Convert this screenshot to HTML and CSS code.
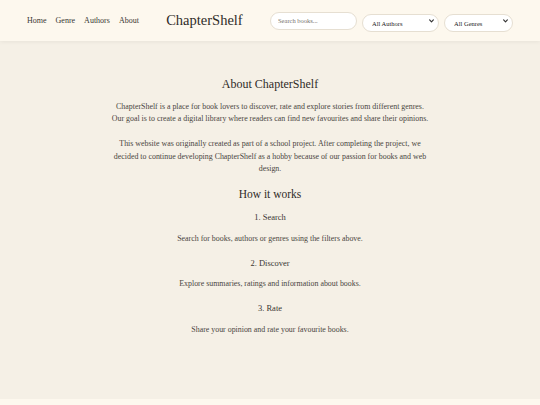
FILE: index.html
```html
<!DOCTYPE html>
<html lang="en">
<head>
<meta charset="utf-8">
<title>About ChapterShelf</title>
<link rel="stylesheet" href="styles.css">
</head>
<body>
<header class="site-header">
  <nav class="nav">
    <a href="#">Home</a>
    <a href="#">Genre</a>
    <a href="#">Authors</a>
    <a href="#">About</a>
  </nav>
  <div class="logo">ChapterShelf</div>
  <div class="controls">
    <input class="search" type="text" placeholder="Search books...">
    <div class="select-wrap authors">
      <select class="filter"><option>All Authors</option></select>
      <svg class="chev" viewBox="0 0 8 6" width="5" height="4"><path d="M1 1.2 L4 4.4 L7 1.2" fill="none" stroke="#333" stroke-width="1.8" stroke-linecap="round" stroke-linejoin="round"/></svg>
    </div>
    <div class="select-wrap genres">
      <select class="filter"><option>All Genres</option></select>
      <svg class="chev" viewBox="0 0 8 6" width="5" height="4"><path d="M1 1.2 L4 4.4 L7 1.2" fill="none" stroke="#333" stroke-width="1.8" stroke-linecap="round" stroke-linejoin="round"/></svg>
    </div>
  </div>
</header>
<main class="content">
  <h1 class="title">About ChapterShelf</h1>
  <p class="text">ChapterShelf is a place for book lovers to discover, rate and explore stories from different genres. Our goal is to create a digital library where readers can find new favourites and share their opinions.</p>
  <p class="text">This website was originally created as part of a school project. After completing the project, we decided to continue developing ChapterShelf as a hobby because of our passion for books and web design.</p>
  <h2 class="subtitle">How it works</h2>
  <h3 class="step">1. Search</h3>
  <p class="text">Search for books, authors or genres using the filters above.</p>
  <h3 class="step">2. Discover</h3>
  <p class="text">Explore summaries, ratings and information about books.</p>
  <h3 class="step">3. Rate</h3>
  <p class="text">Share your opinion and rate your favourite books.</p>
</main>
<footer class="site-footer"></footer>
</body>
</html>
```
FILE: styles.css
```css
* { box-sizing: border-box; }
html, body { margin: 0; padding: 0; }
body {
  background: #f5f0e6;
  font-family: "Liberation Serif", "DejaVu Serif", serif;
  color: #4a4541;
}
.site-header {
  height: 41px;
  background: #fdf8ee;
  display: flex;
  align-items: center;
  justify-content: space-between;
  padding: 0 27px;
  box-shadow: 0 1px 4px rgba(0,0,0,0.06);
  position: relative;
}
.nav { display: flex; gap: 9px; }
.nav a {
  color: #3a3633;
  text-decoration: none;
  font-size: 8px;
}
.logo {
  font-size: 14.5px;
  color: #2f2b28;
}
.controls { display: flex; gap: 5px; align-items: center; }
.search {
  width: 87px;
  height: 18px;
  border: 1px solid #e6dfd2;
  border-radius: 9px;
  background: #fff;
  font-family: inherit;
  font-size: 6.5px;
  padding: 0 7px;
  outline: none;
}
.search::placeholder { color: #77716b; }
.select-wrap { position: relative; height: 18px; }
.filter {
  -webkit-appearance: none;
  appearance: none;
  width: 100%;
  height: 18px;
  border: 1px solid #e6dfd2;
  border-radius: 9px;
  background: #fff;
  font-family: inherit;
  font-size: 6.5px;
  color: #222;
  padding: 0 12px 0 9px;
  outline: none;
}
.chev {
  position: absolute;
  right: 5px;
  top: 7px;
  pointer-events: none;
}
.authors { width: 77px; }
.genres { width: 69px; }
.content {
  min-height: 358px;
  max-width: 320px;
  margin: 0 auto;
  text-align: center;
  padding-top: 36px;
}
.title {
  font-size: 12px;
  line-height: 14px;
  font-weight: normal;
  margin: 0 0 9.5px;
  color: #2f2b28;
}
.text {
  font-size: 7.9px;
  line-height: 12.6px;
  margin: 0 0 12.4px;
}
.subtitle {
  font-size: 11.5px;
  line-height: 13px;
  font-weight: normal;
  margin: 12px 0 11px;
  color: #2f2b28;
}
.step {
  font-size: 8.5px;
  line-height: 10px;
  font-weight: normal;
  margin: 12.5px 0 10.5px;
  color: #3a3633;
}
.subtitle + .step { margin-top: 0; }
.site-footer {
  height: 6px;
  background: #fdf8ee;
}
```
